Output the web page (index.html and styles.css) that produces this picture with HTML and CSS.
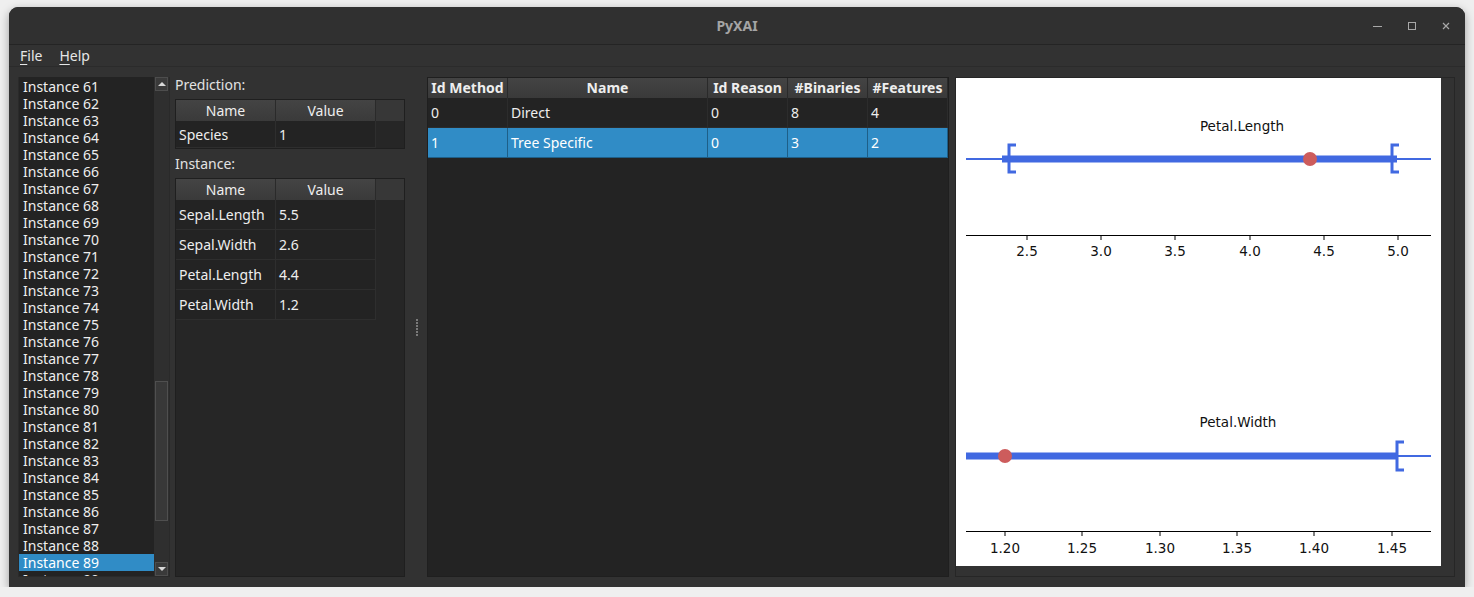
FILE: index.html
```html
<!DOCTYPE html>
<html lang="en">
<head>
    <meta charset="UTF-8">
    <title>PyXAI</title>
    <link rel="stylesheet" href="styles.css">
</head>
<body>
    <div class="window">
        <div class="titlebar">
            <span></span>
            <span class="title">PyXAI</span>
            <div class="controls">
                <div class="ctl"><svg width="12" height="12" viewBox="0 0 12 12"><line x1="1" y1="6.5" x2="10" y2="6.5" stroke="#a8a8a8" stroke-width="1"/></svg></div>
                <div class="ctl"><svg width="12" height="12" viewBox="0 0 12 12"><rect x="2.5" y="2.5" width="7" height="7" fill="none" stroke="#a8a8a8" stroke-width="1"/></svg></div>
                <div class="ctl"><svg width="12" height="12" viewBox="0 0 12 12"><path d="M3 3L9 9M9 3L3 9" stroke="#a8a8a8" stroke-width="1.2"/></svg></div>
            </div>
        </div>

        <div class="menubar">
            <span class="menu"><u>F</u>ile</span>
            <span class="menu"><u>H</u>elp</span>
        </div>

        <div class="main">
            <div class="instances">
                <div class="list">
                    <div class="item">Instance 61</div>
                    <div class="item">Instance 62</div>
                    <div class="item">Instance 63</div>
                    <div class="item">Instance 64</div>
                    <div class="item">Instance 65</div>
                    <div class="item">Instance 66</div>
                    <div class="item">Instance 67</div>
                    <div class="item">Instance 68</div>
                    <div class="item">Instance 69</div>
                    <div class="item">Instance 70</div>
                    <div class="item">Instance 71</div>
                    <div class="item">Instance 72</div>
                    <div class="item">Instance 73</div>
                    <div class="item">Instance 74</div>
                    <div class="item">Instance 75</div>
                    <div class="item">Instance 76</div>
                    <div class="item">Instance 77</div>
                    <div class="item">Instance 78</div>
                    <div class="item">Instance 79</div>
                    <div class="item">Instance 80</div>
                    <div class="item">Instance 81</div>
                    <div class="item">Instance 82</div>
                    <div class="item">Instance 83</div>
                    <div class="item">Instance 84</div>
                    <div class="item">Instance 85</div>
                    <div class="item">Instance 86</div>
                    <div class="item">Instance 87</div>
                    <div class="item">Instance 88</div>
                    <div class="item selected">Instance 89</div>
                    <div class="item">Instance 90</div>
                </div>
                <div class="scrollbar">
                    <div class="sb-btn"><span class="arrow-up"></span></div>
                    <div class="sb-track"><div class="sb-handle"></div></div>
                    <div class="sb-btn"><span class="arrow-down"></span></div>
                </div>
            </div>

            <div class="info">
                <div class="label">Prediction:</div>
                <div class="grid pred">
                    <div class="ghead">
                        <div class="hcell">Name</div>
                        <div class="hcell">Value</div>
                    </div>
                    <div class="grow short">
                        <div class="cell">Species</div>
                        <div class="cell">1</div>
                    </div>
                </div>
                <div class="label second">Instance:</div>
                <div class="grid inst">
                    <div class="ghead">
                        <div class="hcell">Name</div>
                        <div class="hcell">Value</div>
                    </div>
                    <div class="grow"><div class="cell">Sepal.Length</div><div class="cell">5.5</div></div>
                    <div class="grow"><div class="cell">Sepal.Width</div><div class="cell">2.6</div></div>
                    <div class="grow"><div class="cell">Petal.Length</div><div class="cell">4.4</div></div>
                    <div class="grow"><div class="cell">Petal.Width</div><div class="cell">1.2</div></div>
                </div>
            </div>

            <div class="splitter"><div class="grip"><i></i><i></i><i></i><i></i><i></i><i></i></div></div>

            <div class="methods">
                <div class="mhead">
                    <div class="mh w80">Id Method</div>
                    <div class="mh w200">Name</div>
                    <div class="mh w80">Id Reason</div>
                    <div class="mh w80">#Binaries</div>
                    <div class="mh w80">#Features</div>
                </div>
                <div class="mrow">
                    <div class="mc w80">0</div>
                    <div class="mc w200">Direct</div>
                    <div class="mc w80">0</div>
                    <div class="mc w80">8</div>
                    <div class="mc w80">4</div>
                </div>
                <div class="mrow selected">
                    <div class="mc w80">1</div>
                    <div class="mc w200">Tree Specific</div>
                    <div class="mc w80">0</div>
                    <div class="mc w80">3</div>
                    <div class="mc w80">2</div>
                </div>
            </div>

            <div class="plot-frame">
                <svg class="plot" width="485" height="488" viewBox="0 0 485 488">
                    <!-- Petal.Length -->
                    <text x="286" y="53">Petal.Length</text>
                    <line x1="10" y1="81" x2="475" y2="81" stroke="#4169e1" stroke-width="2"/>
                    <line x1="46" y1="81" x2="441" y2="81" stroke="#4169e1" stroke-width="7"/>
                    <path d="M60 67H53V94H60" fill="none" stroke="#4169e1" stroke-width="3"/>
                    <path d="M443 67H436V94H443" fill="none" stroke="#4169e1" stroke-width="3"/>
                    <circle cx="354" cy="81" r="7" fill="#cd5c5c"/>
                    <line x1="10" y1="157.5" x2="475" y2="157.5" stroke="#000" stroke-width="1.2"/>
                    <g stroke="#000" stroke-width="1">
                        <line x1="71" y1="158" x2="71" y2="162"/>
                        <line x1="145" y1="158" x2="145" y2="162"/>
                        <line x1="219" y1="158" x2="219" y2="162"/>
                        <line x1="294" y1="158" x2="294" y2="162"/>
                        <line x1="368" y1="158" x2="368" y2="162"/>
                        <line x1="442" y1="158" x2="442" y2="162"/>
                    </g>
                    <text x="71" y="178">2.5</text>
                    <text x="145" y="178">3.0</text>
                    <text x="219" y="178">3.5</text>
                    <text x="294" y="178">4.0</text>
                    <text x="368" y="178">4.5</text>
                    <text x="442" y="178">5.0</text>

                    <!-- Petal.Width -->
                    <text x="282" y="349">Petal.Width</text>
                    <line x1="440" y1="378" x2="475" y2="378" stroke="#4169e1" stroke-width="2"/>
                    <line x1="10" y1="378" x2="441" y2="378" stroke="#4169e1" stroke-width="7"/>
                    <path d="M448 364H441V392H448" fill="none" stroke="#4169e1" stroke-width="3"/>
                    <circle cx="49" cy="378" r="7" fill="#cd5c5c"/>
                    <line x1="10" y1="453.5" x2="475" y2="453.5" stroke="#000" stroke-width="1.2"/>
                    <g stroke="#000" stroke-width="1">
                        <line x1="49" y1="454" x2="49" y2="458"/>
                        <line x1="126" y1="454" x2="126" y2="458"/>
                        <line x1="204" y1="454" x2="204" y2="458"/>
                        <line x1="281" y1="454" x2="281" y2="458"/>
                        <line x1="358" y1="454" x2="358" y2="458"/>
                        <line x1="436" y1="454" x2="436" y2="458"/>
                    </g>
                    <text x="49" y="475">1.20</text>
                    <text x="126" y="475">1.25</text>
                    <text x="204" y="475">1.30</text>
                    <text x="281" y="475">1.35</text>
                    <text x="358" y="475">1.40</text>
                    <text x="436" y="475">1.45</text>
                </svg>
            </div>
        </div>
    </div>
</body>
</html>
```

FILE: styles.css
```css
* {
    box-sizing: border-box;
}
body {
    margin: 0;
    background: #efefef;
    font-family: "Noto Sans", "DejaVu Sans", sans-serif;
    font-size: 14px;
    color: #eeeeee;
}
.window {
    margin: 7px 0 0 9px;
    width: 1456px;
    height: 580px;
    background: #323232;
    border-radius: 9px 9px 0 0;
    box-shadow: 0 3px 10px rgba(0, 0, 0, 0.35);
    display: flex;
    flex-direction: column;
    overflow: hidden;
}
.titlebar {
    height: 38px;
    flex: none;
    background: #303030;
    border-bottom: 1px solid #242424;
    display: grid;
    grid-template-columns: 1fr auto 1fr;
    align-items: center;
}
.title {
    font-weight: bold;
    font-size: 14px;
    color: #a4a4a4;
}
.controls {
    justify-self: end;
    display: flex;
    padding-right: 2px;
}
.ctl {
    width: 34px;
    height: 37px;
    display: flex;
    align-items: center;
    justify-content: center;
}
.menubar {
    height: 22px;
    flex: none;
    border-bottom: 1px solid #2b2b2b;
    display: flex;
    align-items: center;
    padding-left: 11px;
    gap: 17px;
    color: #e6e6e6;
}
.menu u {
    text-decoration-thickness: 1px;
    text-underline-offset: 3px;
}
.main {
    flex: 1;
    display: flex;
    padding: 10px 10px 10px 9px;
    min-height: 0;
}

/* instance list */
.instances {
    width: 152px;
    display: flex;
    border: 1px solid #2a2a2a;
    border-top: none;
    background: #232323;
}
.list {
    flex: 1;
    overflow: hidden;
    padding-top: 1px;
}
.item {
    height: 17px;
    line-height: 17px;
    padding-left: 4px;
    white-space: nowrap;
}
.item.selected {
    background: #308cc6;
    color: #ffffff;
}
.scrollbar {
    width: 15px;
    display: flex;
    flex-direction: column;
    background: #2f2f2f;
    padding: 0 1px;
}
.sb-btn {
    height: 14px;
    background: #3a3a3a;
    border: 1px solid #4d4d4d;
    display: flex;
    align-items: center;
    justify-content: center;
}
.arrow-up, .arrow-down {
    width: 0;
    height: 0;
    border-left: 4px solid transparent;
    border-right: 4px solid transparent;
}
.arrow-up {
    border-bottom: 4px solid #d8d8d8;
}
.arrow-down {
    border-top: 4px solid #d8d8d8;
}
.sb-track {
    flex: 1;
}
.sb-handle {
    margin-top: 290px;
    height: 140px;
    background: #383838;
    border: 1px solid #4f4f4f;
}

/* prediction / instance tables */
.info {
    width: 230px;
    margin-left: 5px;
    display: flex;
    flex-direction: column;
}
.label {
    height: 22px;
    line-height: 16px;
    color: #e2e2e2;
}
.label.second {
    margin-top: 7px;
}
.grid {
    background: #262626;
    border: 1px solid #1f1f1f;
}
.grid.inst {
    flex: 1;
}
.ghead {
    display: flex;
    height: 21px;
    background: #373737;
}
.hcell {
    width: 100px;
    line-height: 21px;
    text-align: center;
    background: linear-gradient(#444444, #3a3a3a);
    border-right: 1px solid #2a2a2a;
}
.grow {
    display: flex;
    height: 30px;
}
.grow.short {
    height: 27px;
}
.cell {
    width: 100px;
    padding-left: 3px;
    display: flex;
    align-items: center;
    background: #232323;
    border-right: 1px solid #2e2e2e;
    border-bottom: 1px solid #2e2e2e;
    white-space: nowrap;
}

.splitter {
    width: 22px;
    display: flex;
    align-items: center;
    justify-content: center;
}
.grip {
    display: flex;
    flex-direction: column;
    gap: 1px;
    margin-left: 1px;
}
.grip i {
    display: block;
    width: 2px;
    height: 2px;
    background: #7a7a7a;
}

/* reasons table */
.methods {
    width: 522px;
    background: #232323;
    border: 1px solid #1f1f1f;
}
.mhead {
    display: flex;
    height: 20px;
}
.mh {
    line-height: 20px;
    text-align: center;
    font-weight: bold;
    background: linear-gradient(#444444, #3a3a3a);
    border-right: 1px solid #2a2a2a;
    white-space: nowrap;
}
.mrow {
    display: flex;
    height: 30px;
}
.mc {
    padding-left: 3px;
    display: flex;
    align-items: center;
    border-right: 1px solid #2c2c2c;
    border-bottom: 1px solid #2c2c2c;
}
.mrow.selected .mc {
    background: #308cc6;
    color: #ffffff;
    border-color: #1e5f88;
}
.w80 {
    width: 80px;
}
.w200 {
    width: 200px;
}

/* matplotlib canvas */
.plot-frame {
    width: 500px;
    margin-left: 6px;
    background: #323232;
    border: 1px solid #262626;
}
.plot {
    display: block;
    background: #ffffff;
}
.plot text {
    font-family: "DejaVu Sans", sans-serif;
    font-size: 13.5px;
    fill: #111111;
    text-anchor: middle;
}
```
